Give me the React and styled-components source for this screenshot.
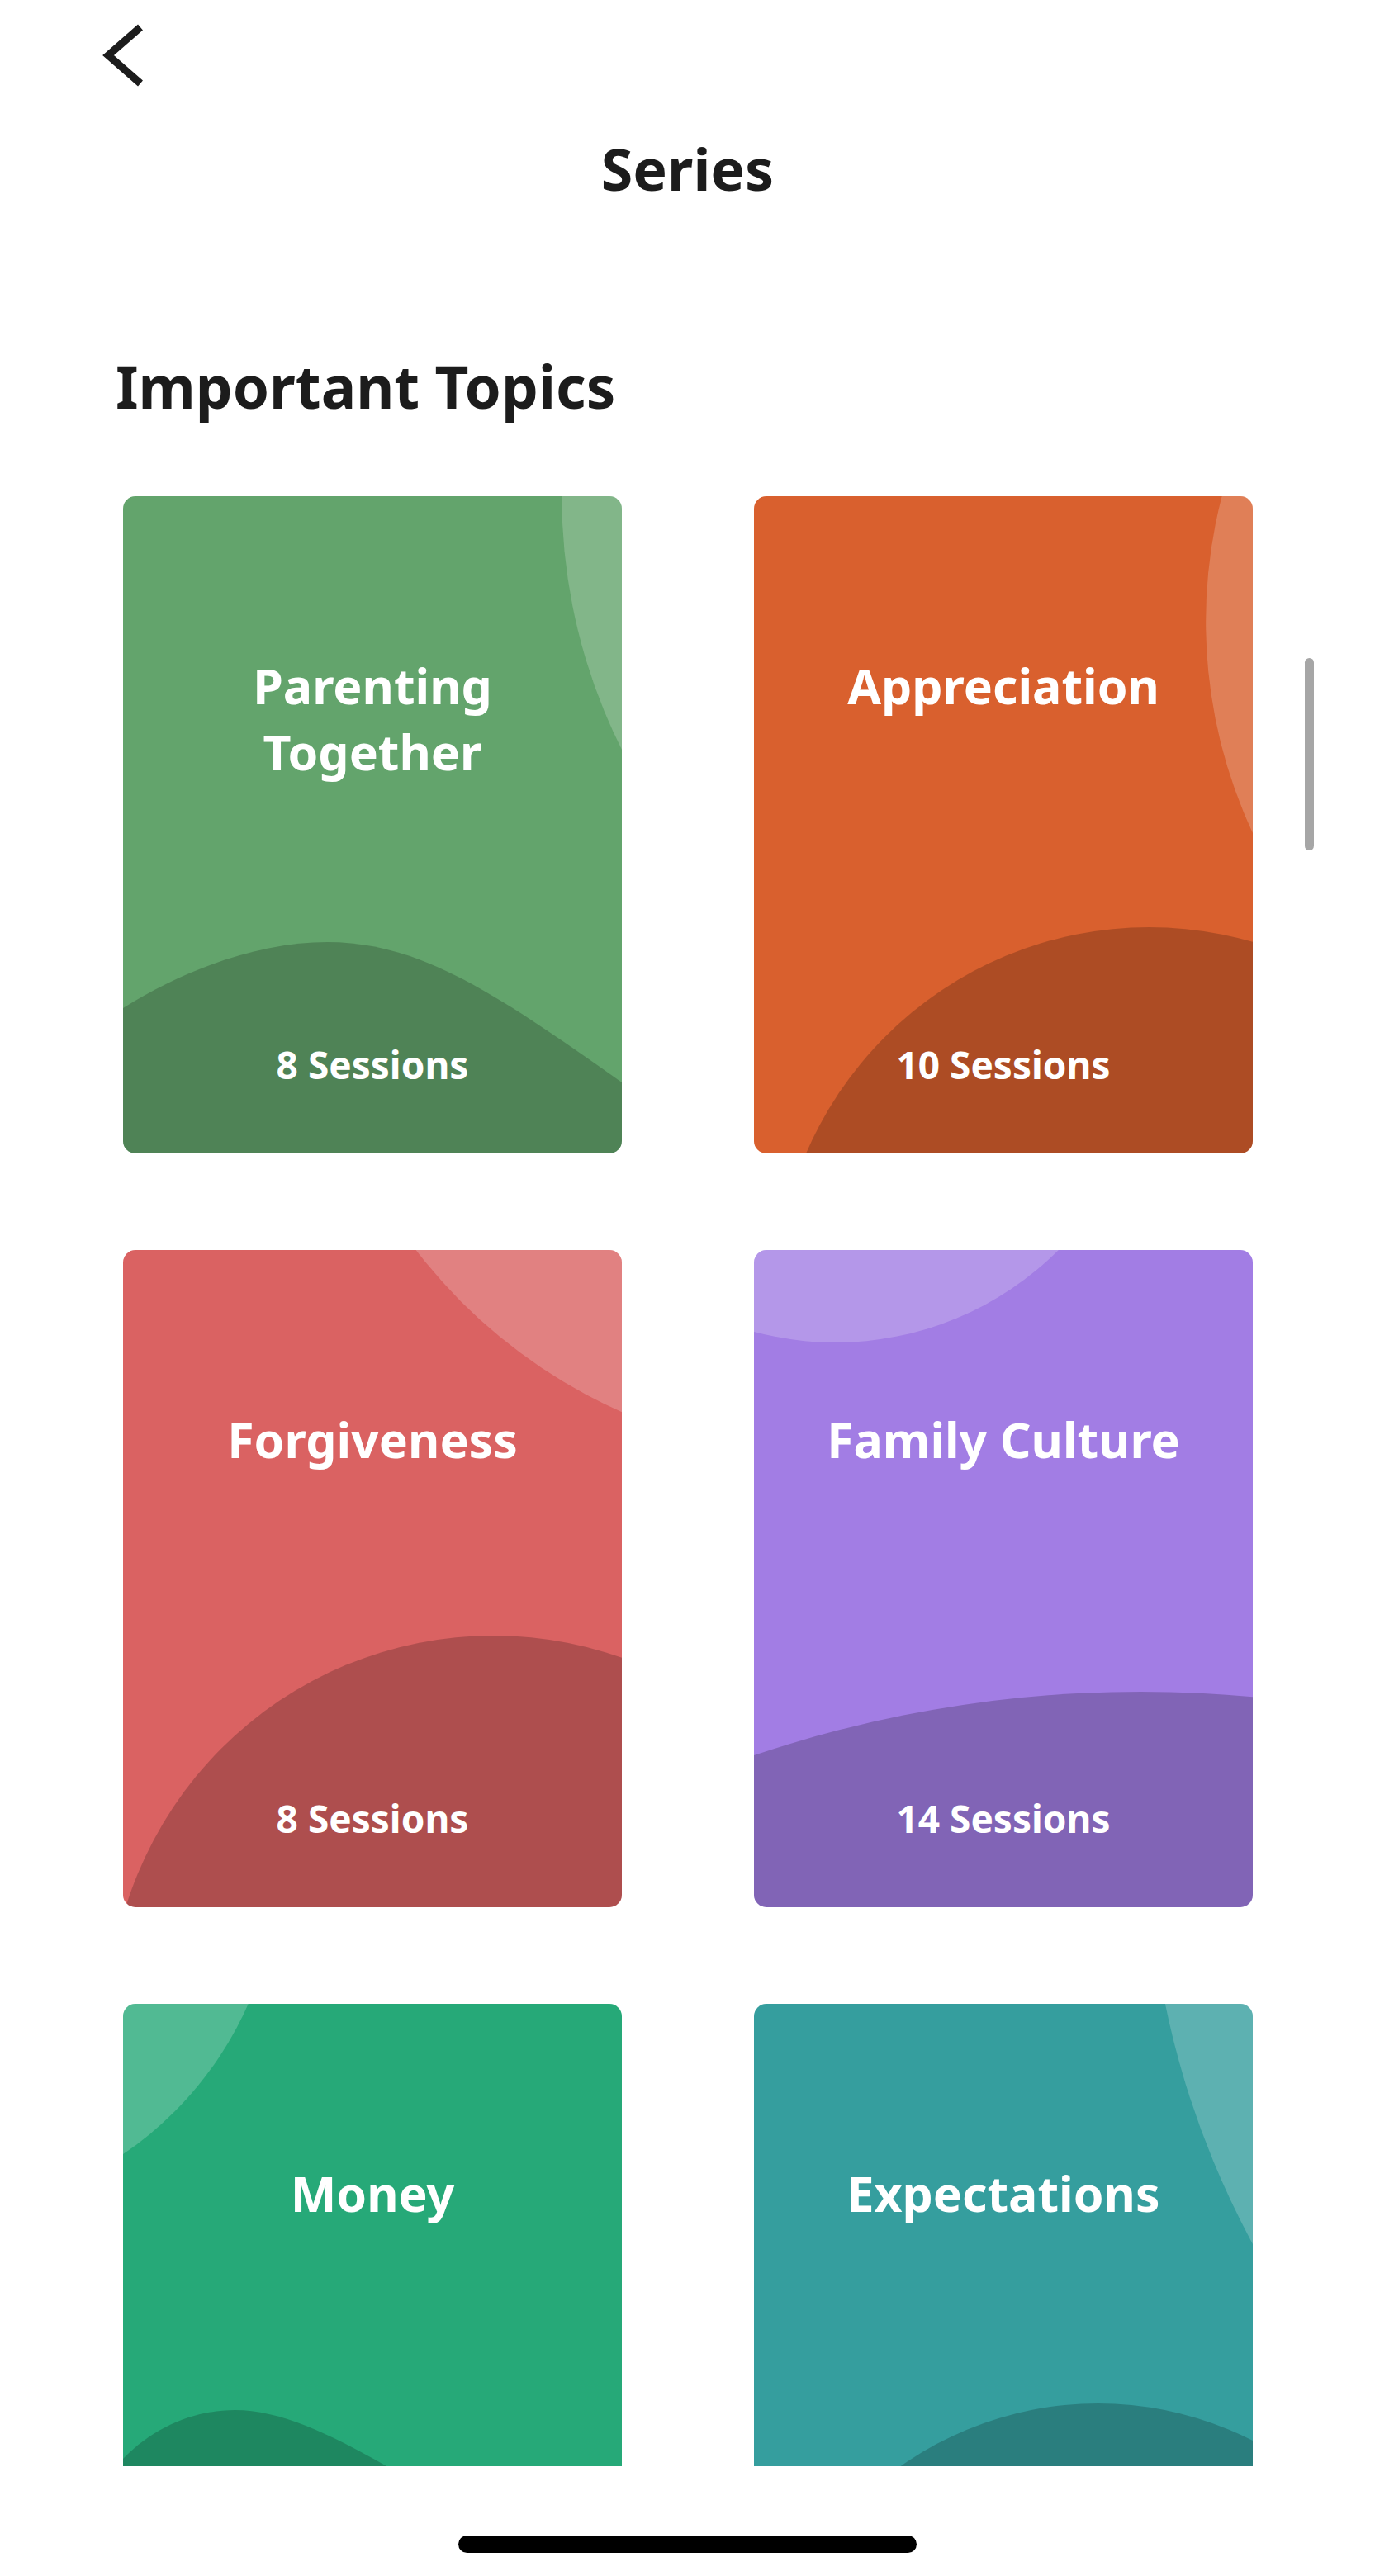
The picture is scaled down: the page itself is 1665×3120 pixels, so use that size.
import React from 'react';
import styled, { createGlobalStyle } from 'styled-components';

const GlobalStyle = createGlobalStyle`
    html, body {
        margin: 0;
        padding: 0;
        background: #ffffff;
    }

    body {
        font-family: "Noto Sans", "Open Sans", sans-serif;
        -webkit-font-smoothing: antialiased;
    }
`;

const Screen = styled.div`
    position: relative;
    width: 1665px;
    height: 3120px;
    display: flex;
    flex-direction: column;
    overflow: hidden;
    background: #ffffff;
`;

const NavBar = styled.div`
    height: 134px;
    box-sizing: border-box;
    padding: 25px 0 0 120px;
    display: flex;
    align-items: flex-start;
`;

const BackButton = styled.button`
    border: none;
    background: none;
    padding: 0;
    margin: 0;
    width: 60px;
    height: 84px;
    cursor: pointer;
`;

const PageTitle = styled.h1`
    margin: 0;
    height: 142px;
    line-height: 140px;
    font-size: 70px;
    font-weight: 700;
    color: #1c1c1c;
    text-align: center;
`;

/* scrolling list of series */
const Content = styled.div`
    height: 2711px;
    flex: none;
    overflow: hidden;
    box-sizing: border-box;
    padding-left: 140px;
`;

const SectionHeading = styled.h2`
    margin: 144px 0 85px 0;
    height: 96px;
    line-height: 96px;
    font-size: 71px;
    font-weight: 700;
    color: #1c1c1c;
`;

const CardGrid = styled.div`
    display: grid;
    grid-template-columns: 604px 604px;
    column-gap: 160px;
    row-gap: 117px;
    padding-left: 9px;
`;

const Card = styled.div`
    position: relative;
    height: 796px;
    border-radius: 15px;
    overflow: hidden;
    background: ${(p) => p.$color};
    display: flex;
    flex-direction: column;
    align-items: center;
    color: #ffffff;
`;

const CardArt = styled.svg`
    position: absolute;
    inset: 0;
    width: 100%;
    height: 100%;
`;

const CardTitle = styled.div`
    position: relative;
    margin-top: 189px;
    font-size: 59px;
    line-height: 80px;
    font-weight: 700;
    text-align: center;
    white-space: pre-line;
`;

const CardSessions = styled.div`
    position: relative;
    margin-top: auto;
    margin-bottom: 78px;
    font-size: 46px;
    line-height: 60px;
    font-weight: 700;
`;

const HomeArea = styled.div`
    flex: 1;
    display: flex;
    justify-content: center;
    padding-top: 84px;
`;

const HomeIndicator = styled.div`
    width: 555px;
    height: 21px;
    border-radius: 11px;
    background: #000000;
`;

const ScrollThumb = styled.div`
    position: absolute;
    top: 797px;
    right: 74px;
    width: 11px;
    height: 233px;
    border-radius: 6px;
    background: #a6a6a6;
`;

const series = [
    {
        title: 'Parenting\nTogether',
        sessions: 8,
        color: '#63a46c',
        light: <circle cx="1215" cy="0" r="682" />,
        dark: <path d="M0 620 C80 570 170 540 248 540 C360 540 450 600 606 710 L606 796 L0 796 Z" />,
    },
    {
        title: 'Appreciation',
        sessions: 10,
        color: '#d9602e',
        light: <circle cx="1152" cy="152" r="603" />,
        dark: <circle cx="480" cy="976" r="454" />,
    },
    {
        title: 'Forgiveness',
        sessions: 8,
        color: '#da6262',
        light: <circle cx="866" cy="-393" r="644" />,
        dark: <circle cx="450" cy="935" r="468" />,
    },
    {
        title: 'Family Culture',
        sessions: 14,
        color: '#a27de4',
        light: <circle cx="99" cy="-272" r="384" />,
        dark: <circle cx="470" cy="2008" r="1473" />,
    },
    {
        title: 'Money',
        color: '#26a978',
        light: <circle cx="-241" cy="-174" r="430" />,
        dark: <path d="M0 551 C40 510 90 492 136 492 C190 492 250 520 322 561 C380 600 420 680 440 796 L0 796 Z" />,
    },
    {
        title: 'Expectations',
        color: '#359e9e',
        light: <circle cx="1530" cy="-212" r="1052" />,
        dark: <circle cx="418" cy="900" r="416" />,
    },
];

const SeriesCard = ({ item }) => (
    <Card $color={item.color}>
        <CardArt viewBox="0 0 606 796" preserveAspectRatio="none">
            <g fill="#ffffff" fillOpacity="0.2">{item.light}</g>
            <g fill="#000000" fillOpacity="0.2">{item.dark}</g>
        </CardArt>
        <CardTitle>{item.title}</CardTitle>
        {item.sessions && <CardSessions>{item.sessions} Sessions</CardSessions>}
    </Card>
);

const App = () => {
    return (
        <Screen>
            <GlobalStyle />
            <NavBar>
                <BackButton aria-label="Back">
                    <svg width="60" height="84" viewBox="0 0 60 84">
                        <path
                            d="M50 8 L11 42 L50 76"
                            fill="none"
                            stroke="#1c1c1c"
                            strokeWidth="9"
                            strokeLinejoin="miter"
                        />
                    </svg>
                </BackButton>
            </NavBar>
            <PageTitle>Series</PageTitle>
            <Content>
                <SectionHeading>Important Topics</SectionHeading>
                <CardGrid>
                    {series.map((item) => (
                        <SeriesCard key={item.title} item={item} />
                    ))}
                </CardGrid>
            </Content>
            <HomeArea>
                <HomeIndicator />
            </HomeArea>
            <ScrollThumb />
        </Screen>
    );
};

export default App;
